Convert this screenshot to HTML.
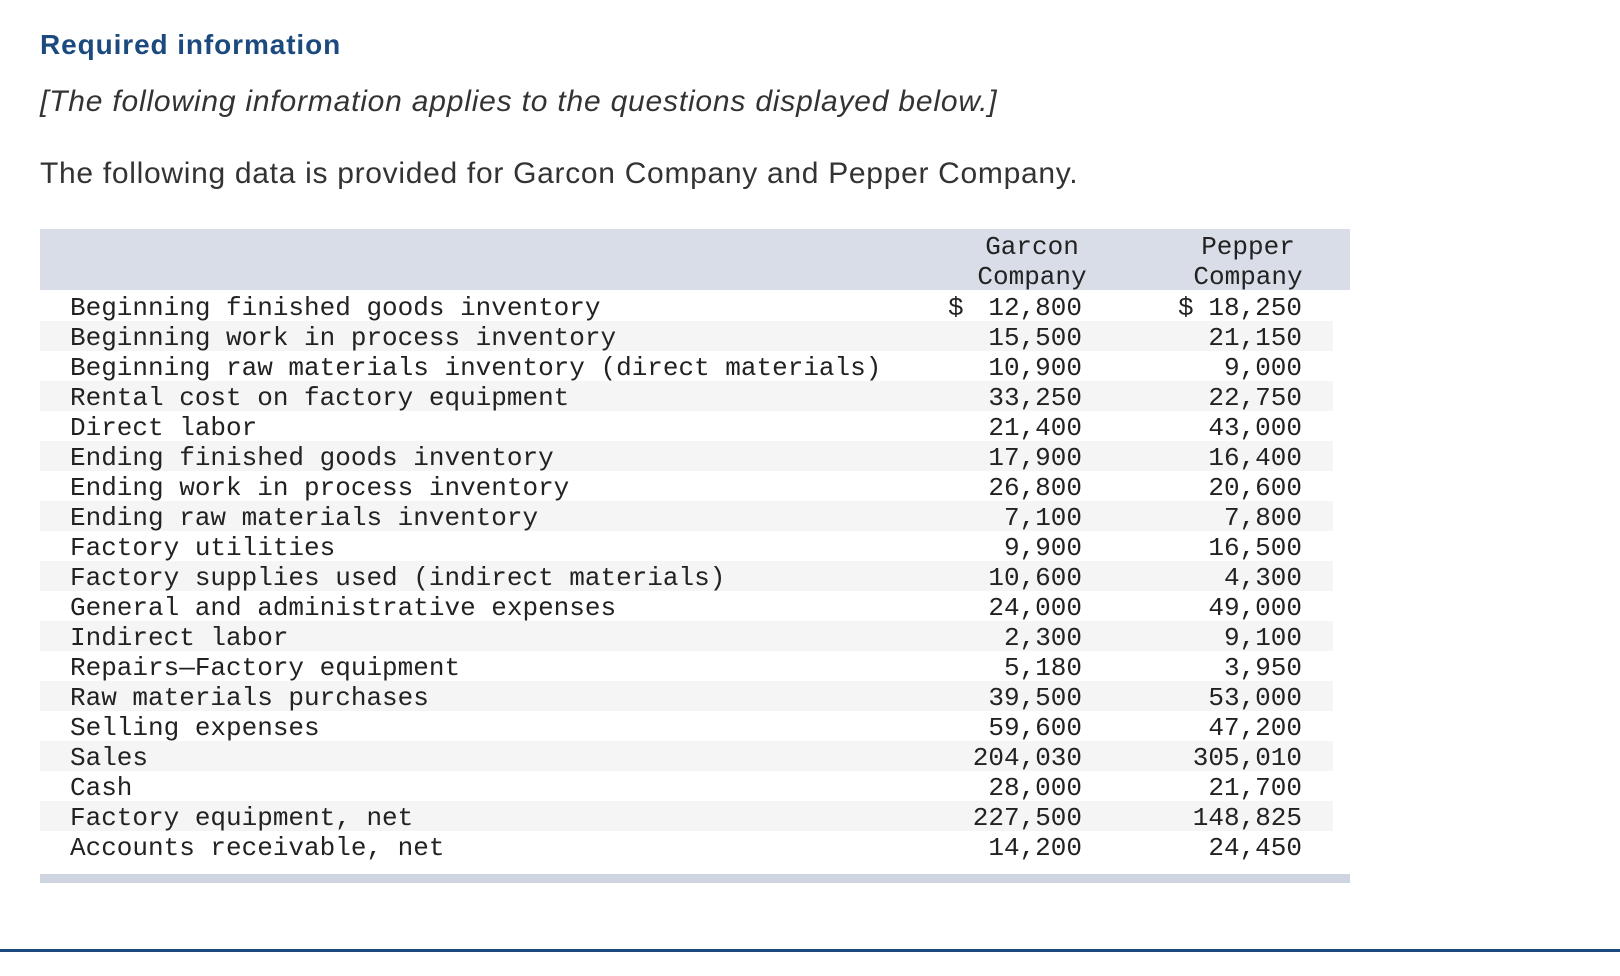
<!DOCTYPE html>
<html><head><meta charset="utf-8"><style>
*{margin:0;padding:0;box-sizing:border-box}
body{width:1620px;height:976px;background:#fff;position:relative;overflow:hidden;font-family:"Liberation Sans",Arial,sans-serif;color:#222}
.abs{position:absolute;white-space:nowrap}
.h1{left:40px;top:29px;font-size:28px;font-weight:bold;color:#1d4a7e;letter-spacing:0.9px}
.it{left:40px;top:85px;font-size:30px;font-style:italic;color:#333;letter-spacing:0.8px}
.p{left:40px;top:157px;font-size:30px;color:#333;letter-spacing:0.7px}
.hdr{left:40px;top:229px;width:1310px;height:61px;background:#d8dde7}
.mono{font-family:"Liberation Mono","DejaVu Sans Mono",monospace;font-size:26px;color:#222}
.row{position:absolute;left:40px;width:1293px;height:30px;line-height:34px}
.row.alt{background:#f5f5f5}
.row .l{position:absolute;left:30px}
.row .g{position:absolute;right:251px}
.row .pp{position:absolute;right:31px}
.row .d1{position:absolute;left:908px}
.row .d2{position:absolute;left:1138px}
.ch{text-align:center;line-height:30px}
.bar{left:40px;top:874px;width:1310px;height:9px;background:#cfd5e0}
.line{left:0;top:949px;width:1620px;height:3px;background:#1d4a7e}
</style></head><body>
<div class="abs h1">Required information</div>
<div class="abs it">[The following information applies to the questions displayed below.]</div>
<div class="abs p">The following data is provided for Garcon Company and Pepper Company.</div>
<div class="abs hdr"></div>
<div class="abs mono ch" style="left:962px;top:232px;width:140px">Garcon<br>Company</div>
<div class="abs mono ch" style="left:1178px;top:232px;width:140px">Pepper<br>Company</div>
<div class="mono">
<div class="row" style="top:291px"><span class="l">Beginning finished goods inventory</span><span class="d1">$</span><span class="g">12,800</span><span class="d2">$</span><span class="pp">18,250</span></div>
<div class="row alt" style="top:321px"><span class="l">Beginning work in process inventory</span><span class="g">15,500</span><span class="pp">21,150</span></div>
<div class="row" style="top:351px"><span class="l">Beginning raw materials inventory (direct materials)</span><span class="g">10,900</span><span class="pp">9,000</span></div>
<div class="row alt" style="top:381px"><span class="l">Rental cost on factory equipment</span><span class="g">33,250</span><span class="pp">22,750</span></div>
<div class="row" style="top:411px"><span class="l">Direct labor</span><span class="g">21,400</span><span class="pp">43,000</span></div>
<div class="row alt" style="top:441px"><span class="l">Ending finished goods inventory</span><span class="g">17,900</span><span class="pp">16,400</span></div>
<div class="row" style="top:471px"><span class="l">Ending work in process inventory</span><span class="g">26,800</span><span class="pp">20,600</span></div>
<div class="row alt" style="top:501px"><span class="l">Ending raw materials inventory</span><span class="g">7,100</span><span class="pp">7,800</span></div>
<div class="row" style="top:531px"><span class="l">Factory utilities</span><span class="g">9,900</span><span class="pp">16,500</span></div>
<div class="row alt" style="top:561px"><span class="l">Factory supplies used (indirect materials)</span><span class="g">10,600</span><span class="pp">4,300</span></div>
<div class="row" style="top:591px"><span class="l">General and administrative expenses</span><span class="g">24,000</span><span class="pp">49,000</span></div>
<div class="row alt" style="top:621px"><span class="l">Indirect labor</span><span class="g">2,300</span><span class="pp">9,100</span></div>
<div class="row" style="top:651px"><span class="l">Repairs—Factory equipment</span><span class="g">5,180</span><span class="pp">3,950</span></div>
<div class="row alt" style="top:681px"><span class="l">Raw materials purchases</span><span class="g">39,500</span><span class="pp">53,000</span></div>
<div class="row" style="top:711px"><span class="l">Selling expenses</span><span class="g">59,600</span><span class="pp">47,200</span></div>
<div class="row alt" style="top:741px"><span class="l">Sales</span><span class="g">204,030</span><span class="pp">305,010</span></div>
<div class="row" style="top:771px"><span class="l">Cash</span><span class="g">28,000</span><span class="pp">21,700</span></div>
<div class="row alt" style="top:801px"><span class="l">Factory equipment, net</span><span class="g">227,500</span><span class="pp">148,825</span></div>
<div class="row" style="top:831px"><span class="l">Accounts receivable, net</span><span class="g">14,200</span><span class="pp">24,450</span></div>
</div>
<div class="abs bar"></div>
<div class="abs line"></div>
</body></html>
